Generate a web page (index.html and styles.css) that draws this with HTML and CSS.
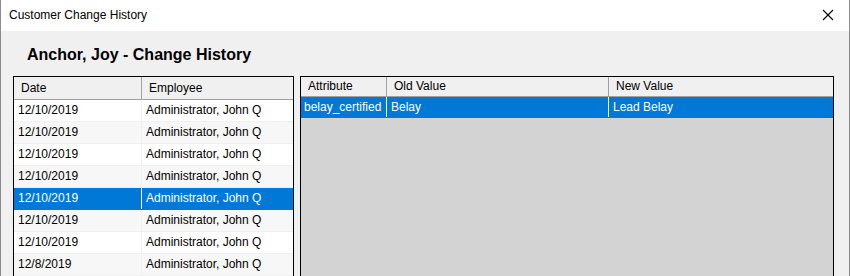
FILE: index.html
```html
<!DOCTYPE html>
<html>
<head>
    <link rel="stylesheet" href="styles.css">
</head>
<body>
    <div class="window">
        <div class="titlebar">
            <div class="caption">Customer Change History</div>
            <div class="close">
                <svg width="12" height="12" viewBox="0 0 12 12"><path d="M1 1 L11 11 M11 1 L1 11" stroke="#000" stroke-width="1.1"/></svg>
            </div>
        </div>
        <div class="client">
            <div class="heading">Anchor, Joy - Change History</div>
            <div class="panes">
                <div class="grid left">
                    <div class="row head">
                        <div class="cell c-date">Date</div>
                        <div class="cell c-emp">Employee</div>
                    </div>
                    <div class="row"><div class="cell c-date">12/10/2019</div><div class="cell c-emp">Administrator, John Q</div></div>
                    <div class="row alt"><div class="cell c-date">12/10/2019</div><div class="cell c-emp">Administrator, John Q</div></div>
                    <div class="row"><div class="cell c-date">12/10/2019</div><div class="cell c-emp">Administrator, John Q</div></div>
                    <div class="row alt"><div class="cell c-date">12/10/2019</div><div class="cell c-emp">Administrator, John Q</div></div>
                    <div class="row sel"><div class="cell c-date">12/10/2019</div><div class="cell c-emp">Administrator, John Q</div></div>
                    <div class="row alt"><div class="cell c-date">12/10/2019</div><div class="cell c-emp">Administrator, John Q</div></div>
                    <div class="row"><div class="cell c-date">12/10/2019</div><div class="cell c-emp">Administrator, John Q</div></div>
                    <div class="row alt"><div class="cell c-date">12/8/2019</div><div class="cell c-emp">Administrator, John Q</div></div>
                </div>
                <div class="grid right">
                    <div class="row head">
                        <div class="cell c-attr">Attribute</div>
                        <div class="cell c-old">Old Value</div>
                        <div class="cell c-new">New Value</div>
                    </div>
                    <div class="row sel"><div class="cell c-attr">belay_certified</div><div class="cell c-old">Belay</div><div class="cell c-new">Lead Belay</div></div>
                    <div class="empty"></div>
                </div>
            </div>
        </div>
    </div>
</body>
</html>
```

FILE: styles.css
```css
body {
    margin: 0;
    font-family: 'Liberation Sans', Arial, sans-serif;
    font-size: 12px;
    color: #000;
    overflow: hidden;
}
.window {
    width: 850px;
    height: 276px;
    box-sizing: border-box;
    border-left: 1px solid #8c8c8c;
    border-right: 1px solid #8c8c8c;
    display: flex;
    flex-direction: column;
    background: #f0f0f0;
}
.titlebar {
    height: 31px;
    background: #fff;
    display: flex;
    align-items: center;
    justify-content: space-between;
    padding: 0 15px 0 8px;
    flex-shrink: 0;
}
.caption {
    font-size: 12px;
    margin-top: -1px;
}
.close {
    display: flex;
    margin-top: -2px;
}
.client {
    flex: 1;
    padding: 12px 15px 0 12px;
    display: flex;
    flex-direction: column;
    overflow: hidden;
}
.heading {
    font-weight: bold;
    font-size: 16px;
    padding-left: 14px;
    height: 33px;
    line-height: 23px;
}
.panes {
    display: flex;
    gap: 6px;
    flex: 1;
}
.grid {
    border: 1px solid #000;
    border-bottom: none;
    background: #fff;
    display: flex;
    flex-direction: column;
}
.left {
    width: 279px;
}
.right {
    flex: 1;
    background: #d3d3d3;
}
.row {
    display: flex;
    height: 22px;
    line-height: 21px;
    border-bottom: 1px solid #f0f0f0;
    box-sizing: border-box;
    background: #fff;
}
.row.alt {
    background: #f7f7f7;
}
.row.head {
    background: #f0f0f0;
    border-bottom: 1px solid #a0a0a0;
    height: 23px;
    line-height: 22px;
}
.right .row.head {
    height: 20px;
    line-height: 19px;
}
.right .row.sel {
    height: 21px;
    line-height: 21px;
}
.row.sel {
    background: #0078d7;
    color: #fff;
    border-bottom-color: #0078d7;
}
.cell {
    padding-left: 4px;
    box-sizing: border-box;
    border-right: 1px solid #f0f0f0;
    white-space: nowrap;
    overflow: hidden;
}
.head .cell {
    padding-left: 7px;
    border-right: 1px solid #a0a0a0;
}
.sel .cell {
    border-right-color: #fff;
}
.c-date { width: 128px; }
.c-emp { flex: 1; border-right: none; }
.c-attr { width: 86px; padding-left: 3px; }
.c-old { width: 222px; }
.c-new { flex: 1; border-right: none; }
.head .c-emp, .head .c-new { border-right: none; }
.empty {
    flex: 1;
}
```
